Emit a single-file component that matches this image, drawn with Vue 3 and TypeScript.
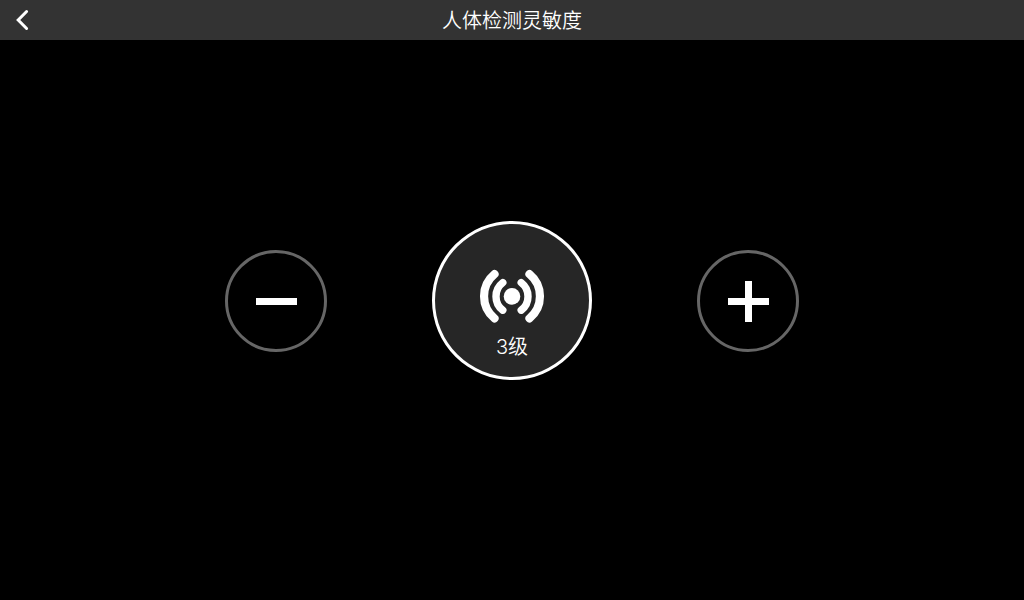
<script setup lang="ts">
import { computed, ref } from 'vue'

const MIN_LEVEL = 1
const MAX_LEVEL = 5

const level = ref<number>(3)
const levelText = computed<string>(() => `${level.value}级`)

function change(step: number): void {
  level.value = Math.min(MAX_LEVEL, Math.max(MIN_LEVEL, level.value + step))
}

function goBack(): void {
  window.history.back()
}
</script>

<template>
  <div class="page">
    <header class="bar">
      <button class="back" type="button" aria-label="返回" @click="goBack">
        <svg width="14" height="22" viewBox="0 0 14 22" aria-hidden="true">
          <path d="M11.6 2.5 3.2 11l8.4 8.5" />
        </svg>
      </button>
      <h1 class="title">人体检测灵敏度</h1>
    </header>

    <main class="controls">
      <button class="step" type="button" aria-label="降低灵敏度" @click="change(-1)">
        <svg width="42" height="42" viewBox="0 0 42 42" aria-hidden="true">
          <path d="M1 18h41v7H1z" />
        </svg>
      </button>

      <output class="level">
        <svg class="signal" width="64" height="52" viewBox="0 0 64 52" aria-hidden="true">
          <circle cx="32" cy="26.4" r="8.3" />
          <g stroke-width="8.2">
            <path d="M14.5 4.1a28.6 28.6 0 0 0 0 44.2" />
            <path d="M49.5 4.1a28.6 28.6 0 0 1 0 44.2" />
          </g>
          <g stroke-width="7.4">
            <path d="M22.8 12.6a17.4 17.4 0 0 0 0 27.6" />
            <path d="M41.2 12.6a17.4 17.4 0 0 1 0 27.6" />
          </g>
        </svg>
        <span class="caption">{{ levelText }}</span>
      </output>

      <button class="step" type="button" aria-label="提高灵敏度" @click="change(1)">
        <svg width="42" height="42" viewBox="0 0 42 42" aria-hidden="true">
          <path d="M1 18h41v7H1z M18 1h7v41h-7z" />
        </svg>
      </button>
    </main>
  </div>
</template>

<style>
body {
  margin: 0;
  background: #000;
}
</style>

<style scoped>
.page {
  display: flex;
  flex-direction: column;
  min-height: 100vh;
  background: #000;
  color: #fff;
  font-family: Inter, "Noto Sans CJK SC", sans-serif;
  font-weight: 350;
}

.bar {
  display: grid;
  grid-template-columns: 48px 1fr 48px;
  align-items: start;
  height: 40px;
  background: #333;
}

.back {
  display: flex;
  align-items: center;
  height: 40px;
  padding: 0 0 0 15px;
  border: 0;
  background: none;
  cursor: pointer;
}

.back path {
  fill: none;
  stroke: #fff;
  stroke-width: 3;
  stroke-linecap: round;
}

.title {
  margin: 0;
  font-size: 20px;
  font-weight: 350;
  line-height: 42px;
  text-align: center;
}

.controls {
  flex: 1;
  display: flex;
  align-items: center;
  justify-content: center;
  gap: 105px;
  padding-bottom: 38px;
}

.step {
  box-sizing: border-box;
  display: flex;
  align-items: center;
  justify-content: center;
  width: 102px;
  height: 102px;
  padding: 0;
  border: 3px solid #666;
  border-radius: 50%;
  background: #000;
  cursor: pointer;
}

.step path {
  fill: #fff;
}

.level {
  box-sizing: border-box;
  display: flex;
  flex-direction: column;
  align-items: center;
  width: 160px;
  height: 159px;
  margin-bottom: 1px;
  padding-top: 46px;
  border: 3px solid #fff;
  border-radius: 50%;
  background: #262626;
}

.signal {
  overflow: visible;
  fill: #fff;
}

.signal g {
  fill: none;
  stroke: #fff;
  stroke-linecap: round;
}

.caption {
  margin-top: 10px;
  font-size: 20px;
  line-height: 30px;
}
</style>
